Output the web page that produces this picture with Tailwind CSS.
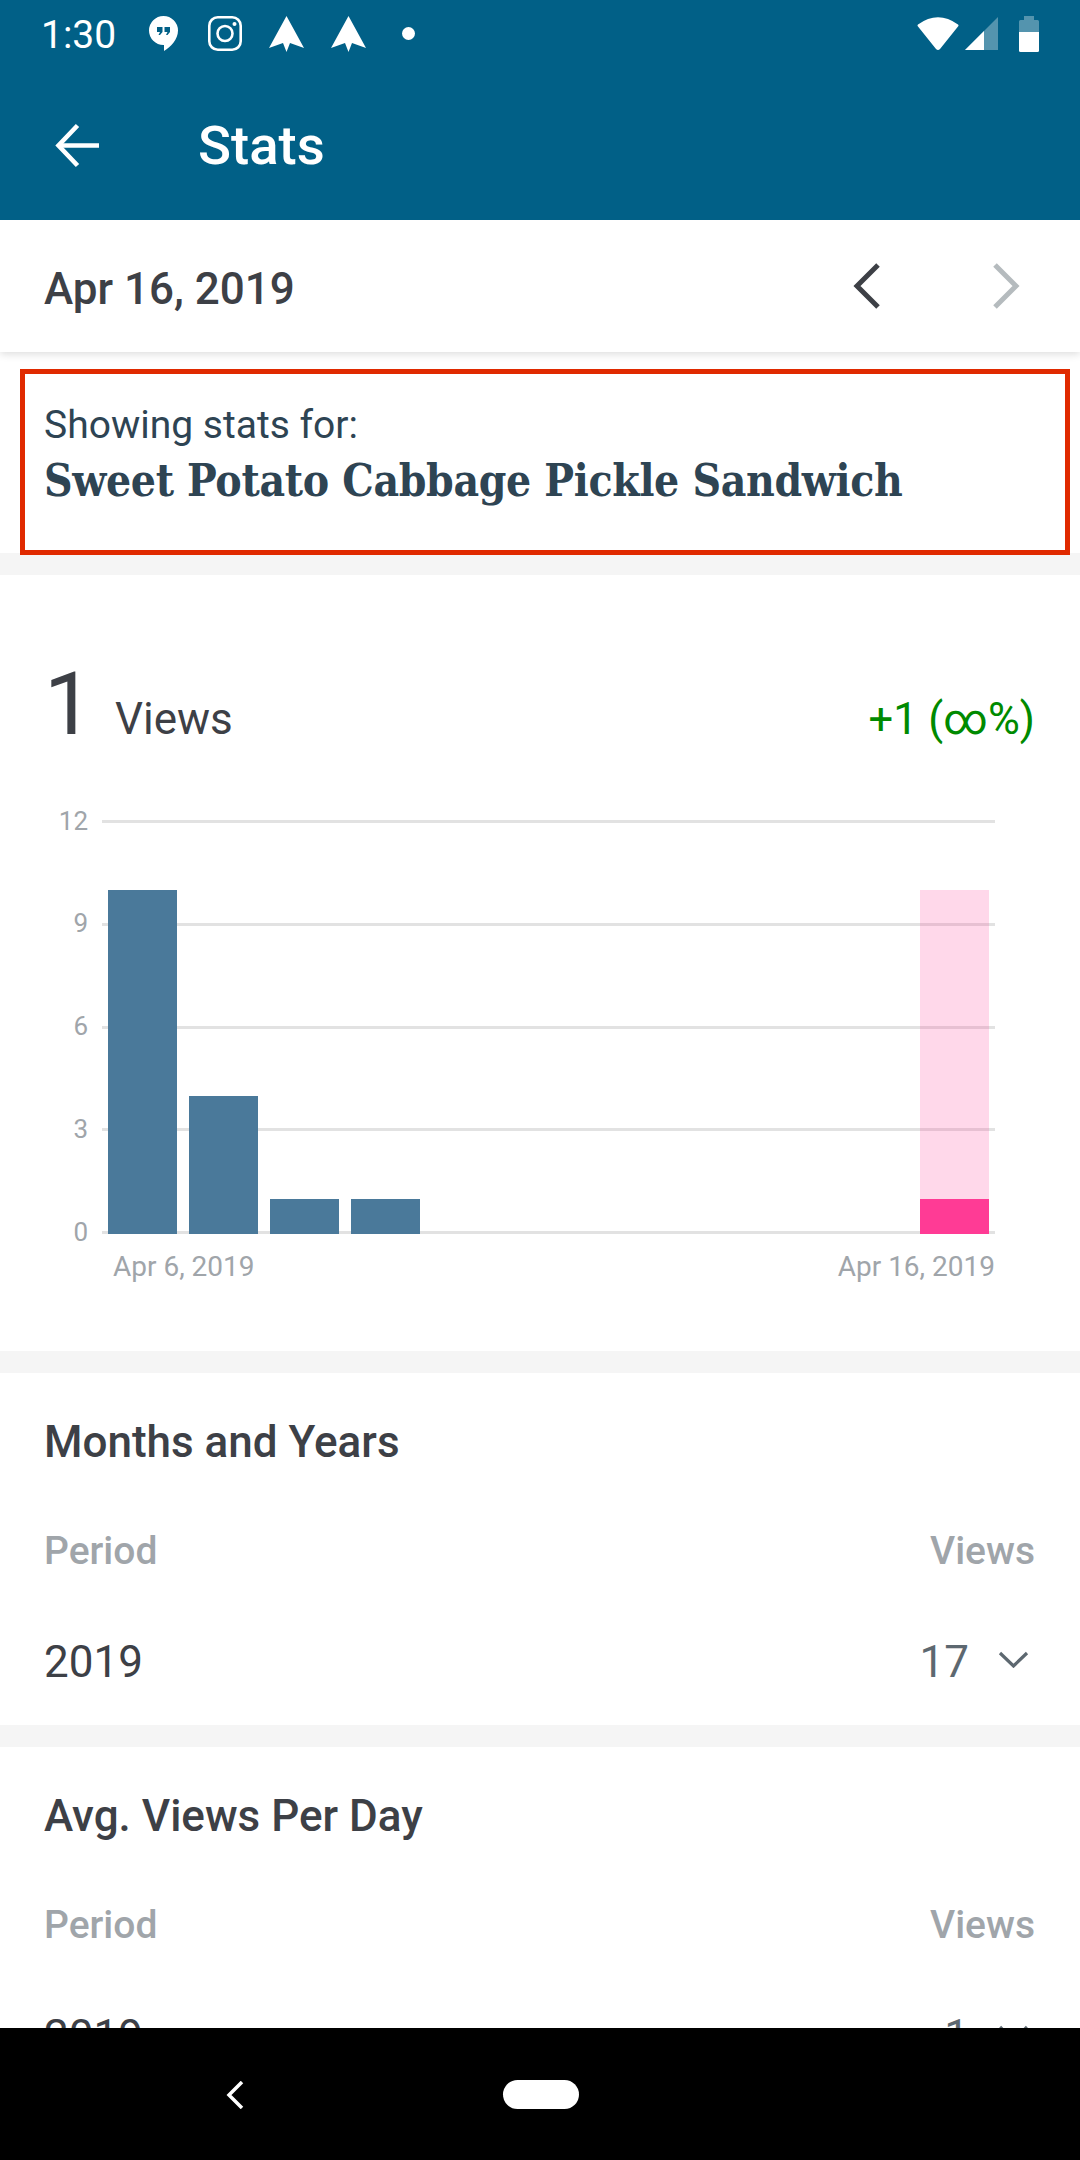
<!DOCTYPE html>
<html lang="en">
<head>
  <meta charset="UTF-8" />
  <title>Stats</title>
  <script src="https://cdn.jsdelivr.net/npm/@tailwindcss/browser@4"></script>
</head>
<body class="bg-white">
  <div class="relative w-[1080px] h-[2160px] flex flex-col overflow-hidden font-['Roboto',sans-serif] bg-[#f5f5f5]">

    <!-- status bar + toolbar -->
    <header class="bg-[#016087] text-white h-[220px] shrink-0">
      <div class="flex items-center h-[66px] pl-[41px] pt-[1px]">
        <span class="text-[39px] leading-none w-[108px] pt-[3px]">1:30</span>
        <svg class="w-[29px] h-[35px]" viewBox="0 0 29 35">
          <path fill="#fff" d="M14.5 0A14.5 14.5 0 0 1 29 14.5C29 23 22 31 15 35V29H14.5A14.5 14.5 0 0 1 14.5 0Z" />
          <path fill="#016087" d="M8 11h5.5v5l-2.5 3H9.500l1.500-3H8zM15.500 11H21v5l-2.500 3H17l1.500-3h-3z" />
        </svg>
        <svg class="ml-[30px] w-[34px] h-[35px]" viewBox="0 0 34 35" fill="none" stroke="#fff" stroke-width="2.600">
          <rect x="1.300" y="1.300" width="31.400" height="32.400" rx="8.500" />
          <circle cx="17" cy="17.500" r="7.500" />
          <circle cx="26.500" cy="8" r="2" fill="#fff" stroke="none" />
        </svg>
        <svg class="ml-[27px] w-[35px] h-[36px]" viewBox="0 0 35 36"><path fill="#fff" d="M17.500 0L35 32L21 27L17.500 36L14 27L0 32Z" /></svg>
        <svg class="ml-[27px] w-[35px] h-[36px]" viewBox="0 0 35 36"><path fill="#fff" d="M17.500 0L35 32L21 27L17.500 36L14 27L0 32Z" /></svg>
        <div class="ml-[36px] w-[13px] h-[13px] rounded-full bg-white"></div>
        <svg class="ml-auto w-[42px] h-[33px]" viewBox="0 0 42 33"><path fill="#fff" d="M1 7.500Q21 -7 41 7.500Q42 8.500 41 9.500L23 32Q21 34 19 32L1 9.500Q0 8.500 1 7.500Z" /></svg>
        <svg class="ml-[6px] w-[33px] h-[33px]" viewBox="0 0 33 33">
          <path fill="#fff" fill-opacity="0.33" d="M0 33L33 0V33Z" />
          <path fill="#fff" d="M0 33L19 14V33Z" />
        </svg>
        <svg class="ml-[21px] mr-[41px] w-[20px] h-[36px]" viewBox="0 0 20 36">
          <path fill="#fff" fill-opacity="0.33" d="M5 0h10v4h3.500q1.500 0 1.500 1.500V16H0V5.500Q0 4 1.500 4H5z" />
          <path fill="#fff" d="M0 16h20v18.500q0 1.500-1.500 1.500h-17Q0 36 0 34.500z" />
        </svg>
      </div>
      <div class="flex items-center h-[154px] pt-[4px]">
        <svg class="ml-[54px] w-[47px] h-[47px]" viewBox="0 0 47 47" fill="none" stroke="#fff" stroke-width="4.600">
          <path d="M45 23.500H5" />
          <path d="M23.500 3.500L4.500 23.500L23.500 43.500" />
        </svg>
        <h1 class="ml-[97px] text-[54.500px] leading-none font-medium">Stats</h1>
      </div>
    </header>

    <main class="flex-1 min-h-0 overflow-hidden">
      <!-- date row -->
      <div class="relative z-10 bg-white h-[132px] flex items-center pl-[44px] shadow-[0_2px_8px_rgba(0,0,0,0.14)]">
        <span class="text-[44px] leading-none font-medium text-[#3d4046] pt-[5px]">Apr 16, 2019</span>
        <svg class="ml-auto w-[30px] h-[46px]" viewBox="0 0 30 46" fill="none" stroke="#3d4046" stroke-width="5"><path d="M26 2L5 23L26 44" /></svg>
        <svg class="ml-[109px] mr-[59px] w-[30px] h-[46px]" viewBox="0 0 30 46" fill="none" stroke="#b5bbbe" stroke-width="5"><path d="M4 2L25 23L4 44" /></svg>
      </div>

      <!-- showing stats for -->
      <div class="relative bg-white h-[201px] pl-[44px] pt-[51px] text-[#2e4453]">
        <p class="text-[39px] leading-[44px]">Showing stats for:</p>
        <p class="mt-[7px] text-[44px] leading-[54px] tracking-[-0.33px] font-bold font-['DejaVu_Serif',serif] [font-stretch:condensed]">Sweet Potato Cabbage Pickle Sandwich</p>
        <div class="absolute left-[20px] top-[17px] w-[1050px] h-[186px] border-[5px] border-[#e02a00]"></div>
      </div>

      <!-- views chart -->
      <section class="mt-[22px] bg-white h-[776px] pt-[79px]">
        <div class="flex items-baseline pl-[44px] pr-[45px] text-[#3d4046]">
          <span class="text-[88px] leading-[100px] w-[71px]">1</span>
          <span class="text-[44px]">Views</span>
          <span class="ml-auto text-[43.500px] text-[#008a00]">+1 (∞%)</span>
        </div>
        <div class="relative mt-[66px] ml-[43px] w-[952px] h-[414px]">
          <div class="h-full flex flex-col justify-between text-[26px] text-[#a0a5aa]">
            <div class="flex items-center h-[3px]"><span class="w-[45px] text-right leading-none mb-[2px]">12</span><div class="ml-[14px] flex-1 h-[3px] bg-[#e2e2e2]"></div></div>
            <div class="flex items-center h-[3px]"><span class="w-[45px] text-right leading-none mb-[2px]">9</span><div class="ml-[14px] flex-1 h-[3px] bg-[#e2e2e2]"></div></div>
            <div class="flex items-center h-[3px]"><span class="w-[45px] text-right leading-none mb-[2px]">6</span><div class="ml-[14px] flex-1 h-[3px] bg-[#e2e2e2]"></div></div>
            <div class="flex items-center h-[3px]"><span class="w-[45px] text-right leading-none mb-[2px]">3</span><div class="ml-[14px] flex-1 h-[3px] bg-[#e2e2e2]"></div></div>
            <div class="flex items-center h-[3px]"><span class="w-[45px] text-right leading-none mb-[2px]">0</span><div class="ml-[14px] flex-1 h-[3px] bg-[#e2e2e2]"></div></div>
          </div>
          <!-- bars sit over the grid lines -->
          <div class="absolute left-[64.500px] bottom-0 w-[881.500px] h-[344px] grid grid-cols-11 gap-x-[12px] items-end">
            <div class="h-[344px] bg-[#4a799a]"></div>
            <div class="h-[138px] bg-[#4a799a]"></div>
            <div class="h-[35px] bg-[#4a799a]"></div>
            <div class="h-[35px] bg-[#4a799a]"></div>
            <div></div><div></div><div></div><div></div><div></div><div></div>
            <div class="h-[344px] bg-[#ff3b95]/20 flex items-end"><div class="w-full h-[35px] bg-[#ff3b95]"></div></div>
          </div>
        </div>
        <div class="flex justify-between ml-[113px] w-[882px] mt-[18px] text-[28px] leading-[30px] text-[#a0a5aa]">
          <span>Apr 6, 2019</span>
          <span>Apr 16, 2019</span>
        </div>
      </section>

      <!-- months and years -->
      <section class="mt-[22px] bg-white h-[352px] pl-[44px] pr-[45px] pt-[44px]">
        <h2 class="text-[44px] leading-[50px] font-medium text-[#3d4046]">Months and Years</h2>
        <div class="mt-[59px] flex justify-between text-[39px] leading-[50px] font-medium text-[#a0a5aa]"><span>Period</span><span>Views</span></div>
        <div class="mt-[61px] flex items-center text-[44px] leading-[50px]">
          <span class="text-[#3d4046]">2019</span>
          <span class="ml-auto text-[#5d6870]">17</span>
          <svg class="ml-[29px] mr-[6px] mb-[6px] w-[31px] h-[17px]" viewBox="0 0 31 17" fill="none" stroke="#5d6870" stroke-width="3.200"><path d="M2 2L15.500 15L29 2" /></svg>
        </div>
      </section>

      <!-- avg views per day -->
      <section class="mt-[22px] bg-white h-[352px] pl-[44px] pr-[45px] pt-[44px]">
        <h2 class="text-[44px] leading-[50px] font-medium text-[#3d4046]">Avg. Views Per Day</h2>
        <div class="mt-[59px] flex justify-between text-[39px] leading-[50px] font-medium text-[#a0a5aa]"><span>Period</span><span>Views</span></div>
        <div class="mt-[61px] flex items-center text-[44px] leading-[50px]">
          <span class="text-[#3d4046]">2019</span>
          <span class="ml-auto text-[#5d6870]">1</span>
          <svg class="ml-[29px] mr-[6px] mb-[6px] w-[31px] h-[17px]" viewBox="0 0 31 17" fill="none" stroke="#5d6870" stroke-width="3.200"><path d="M2 2L15.500 15L29 2" /></svg>
        </div>
      </section>
    </main>

    <!-- navigation bar -->
    <footer class="h-[132px] shrink-0 bg-black flex items-center">
      <svg class="ml-[226px] mb-[-2px] w-[18px] h-[28px]" viewBox="0 0 18 28" fill="none" stroke="#fff" stroke-width="3.500"><path d="M16 1L3 14L16 27" /></svg>
      <div class="ml-[259px] w-[76px] h-[29px] rounded-full bg-white"></div>
    </footer>
  </div>
</body>
</html>
